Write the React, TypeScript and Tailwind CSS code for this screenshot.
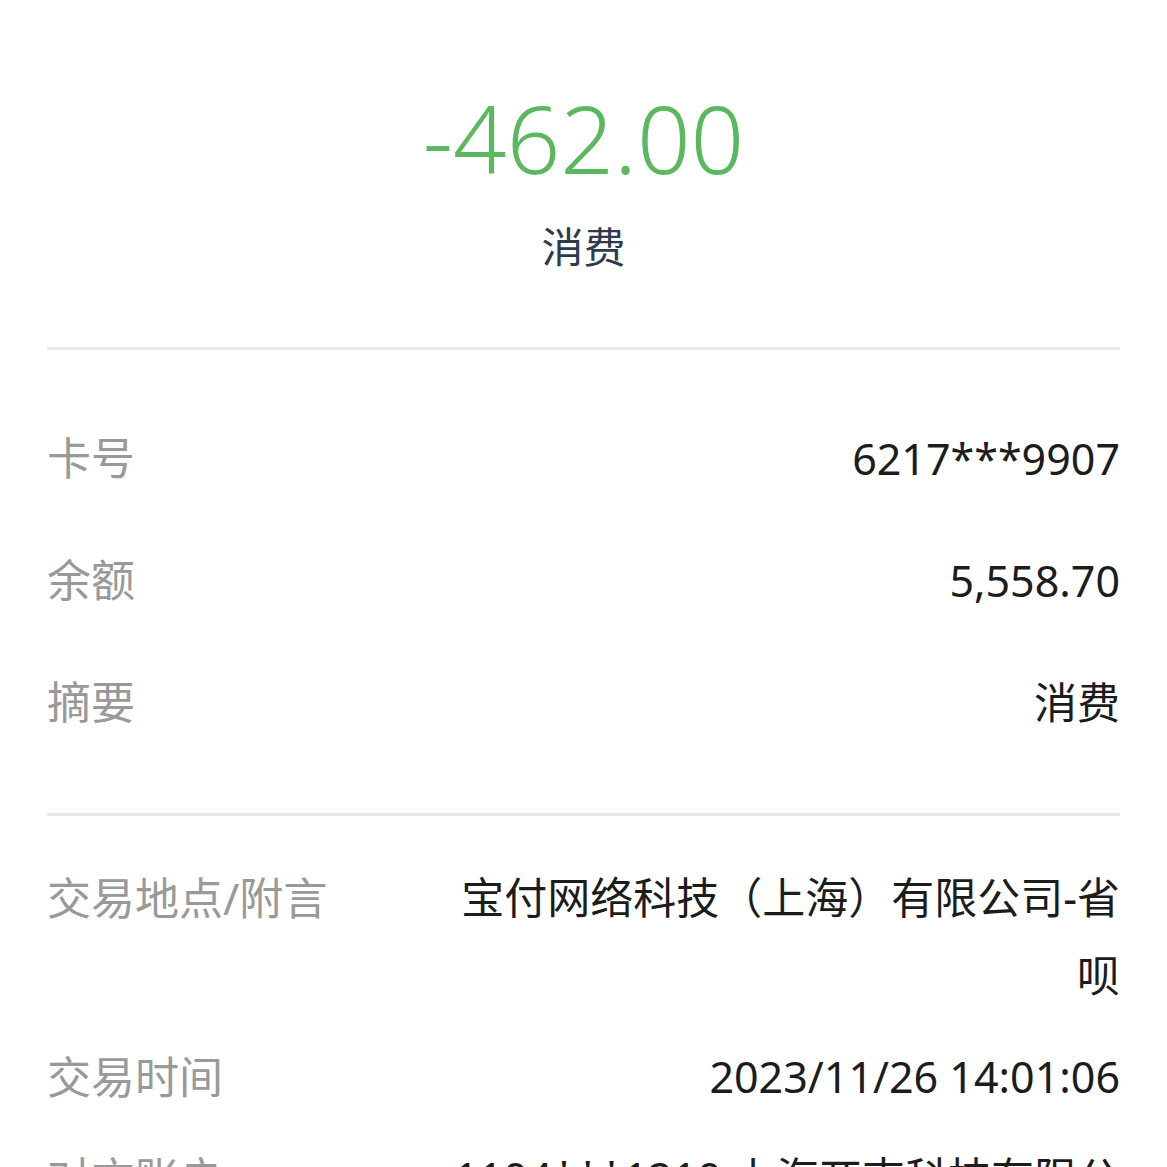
import React from "react";

const font = {
  fontFamily: '"Noto Sans", "Noto Sans CJK SC", sans-serif',
};

function Row({ label, value }: { label: string; value: string }) {
  return (
    <div className="flex h-[122px] items-center justify-between">
      <span className="text-[44px] leading-none text-[#999999]">{label}</span>
      <span className="text-[43px] leading-none text-[#1c1c1c]">{value}</span>
    </div>
  );
}

function Row2({ label, value }: { label: string; value: string }) {
  return (
    <div className="flex items-start">
      <div className="w-[390px] shrink-0 text-[44px] leading-[78px] text-[#999999]">{label}</div>
      <div className="min-w-0 flex-1 text-right text-[43px] leading-[78px] text-[#1c1c1c]">{value}</div>
    </div>
  );
}

export default function App() {
  return (
    <div className="h-[1167px] w-full overflow-hidden bg-white px-[47px]" style={font}>
      <div className="flex flex-col items-center pt-[78px]">
        <div className="h-[120px] text-[94px] font-light leading-[120px] text-[#5cb85f]">-462.00</div>
        <div className="mt-[19px] h-[60px] text-[42px] leading-[60px] text-[#2f3b4c]">消费</div>
      </div>
      <div className="mt-[70px] h-[3px] bg-[#e8e8e8]" />
      <div className="pb-[50px] pt-[47px]">
        <Row label="卡号" value="6217***9907" />
        <Row label="余额" value="5,558.70" />
        <Row label="摘要" value="消费" />
      </div>
      <div className="h-[3px] bg-[#e8e8e8]" />
      <div className="flex flex-col gap-[23px] pt-[43px]">
        <Row2 label="交易地点/附言" value="宝付网络科技（上海）有限公司-省呗" />
        <Row2 label="交易时间" value="2023/11/26 14:01:06" />
        <Row2 label="对方账户" value="1104***1210 上海兀吉科技有限公司" />
      </div>
    </div>
  );
}
